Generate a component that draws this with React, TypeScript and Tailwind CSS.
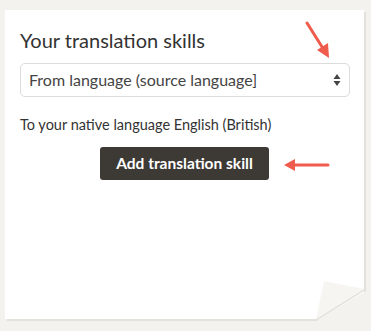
import React from "react";

const Arrow = ({ className, d, head }: { className: string; d: string; head: string }) => (
  <svg className={className} viewBox="0 0 60 60" width="60" height="60">
    <path d={d} stroke="#ef5b4c" strokeWidth="3" fill="none" strokeLinecap="round" />
    <polygon points={head} fill="#ef5b4c" />
  </svg>
);

export default function App() {
  return (
    <div className="relative w-[371px] h-[331px] bg-[#f3f2ee] pt-[10px] pl-[5px] font-['Lato',sans-serif]">
      <div className="relative w-[359px] h-[309px] bg-white shadow-[2px_2px_0_#e2e1dc]">
        <div className="px-[15px] pt-[18px]">
          <h2 className="text-[20px] leading-[25px] text-[#333]">Your translation skills</h2>
          <div className="mt-[10px] h-[34px] w-[330px] rounded-[5px] border border-[#dcdcdc] flex items-center justify-between pl-[8px] pr-[8px]">
            <span className="text-[16px] text-[#444]">From language (source language]</span>
            <svg width="8" height="14" viewBox="0 0 8 14">
              <polygon points="4,1 7.5,6 0.5,6" fill="#444" />
              <polygon points="4,13 7.5,8 0.5,8" fill="#444" />
            </svg>
          </div>
          <p className="mt-[18px] text-[14.5px] leading-[20px] text-[#333]">
            To your native language English (British)
          </p>
          <div className="mt-[12px] flex justify-center">
            <button className="h-[33px] px-[16px] rounded-[3px] bg-[#3d3935] text-white text-[15.5px] font-bold">
              Add translation skill
            </button>
          </div>
        </div>
        {/* folded corner */}
        <svg className="absolute right-[-2px] bottom-[-2px]" width="52" height="42" viewBox="0 0 52 42">
          <polygon points="2,42 52,12 52,42" fill="#f3f2ee" />
          <polygon points="2,40 50,10 50,12 2,42" fill="#e2e1dc" />
          <polygon points="2,40 10,2 50,10" fill="#f6f5f2" />
        </svg>
      </div>
      <Arrow
        className="absolute left-[290px] top-[12px]"
        d="M17 11 L34 38"
        head="39,46 27,38 38,31"
      />
      <Arrow
        className="absolute left-[278px] top-[135px]"
        d="M50 30 L16 30"
        head="6,30 17,24 17,36"
      />
    </div>
  );
}
